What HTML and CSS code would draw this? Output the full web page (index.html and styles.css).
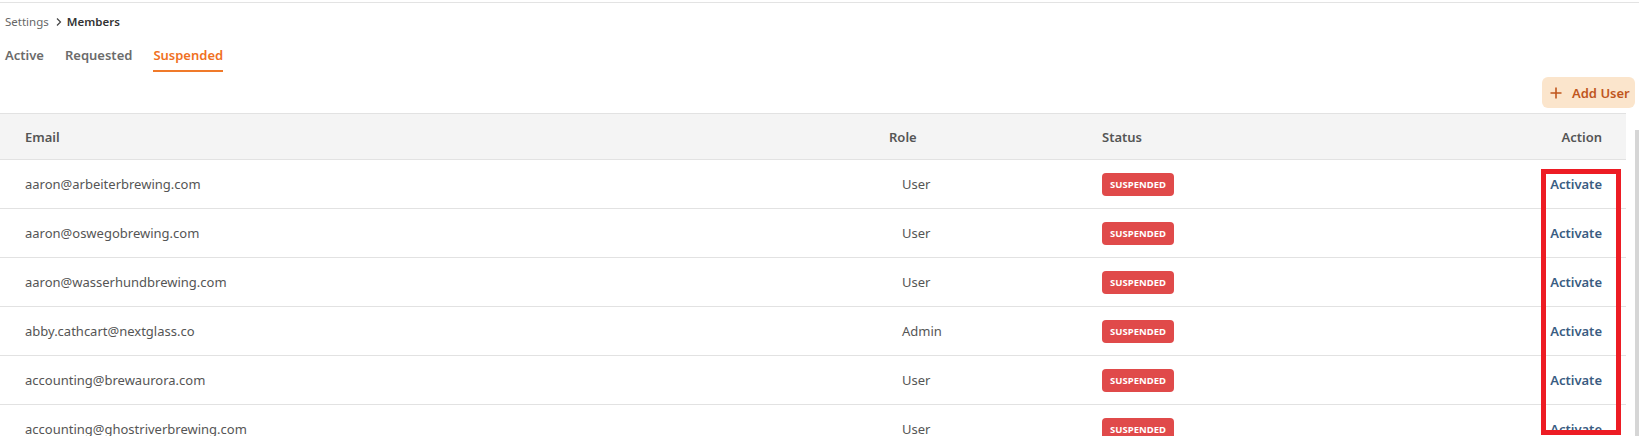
FILE: index.html
```html
<!DOCTYPE html>
<html>
<head>
<meta charset="utf-8">
<link rel="stylesheet" href="styles.css">
</head>
<body>
<div class="page">
  <div class="topline"></div>
  <div class="breadcrumb">
    <span class="crumb">Settings</span>
    <svg class="chev" width="8" height="10" viewBox="0 0 8 10"><path d="M2 1.5 L5.5 5 L2 8.5" fill="none" stroke="#444" stroke-width="1.2"/></svg>
    <span class="crumb-current">Members</span>
  </div>
  <div class="tabs">
    <div class="tab">Active</div>
    <div class="tab">Requested</div>
    <div class="tab active">Suspended</div>
  </div>
  <div class="toolbar">
    <button class="add-btn">
      <svg width="12" height="12" viewBox="0 0 12 12"><path d="M6 0.5 V11.5 M0.5 6 H11.5" stroke="#c0561d" stroke-width="1.6" fill="none"/></svg>
      <span>Add User</span>
    </button>
  </div>
  <div class="table-wrap">
    <div class="table">
      <div class="row head">
        <div class="cell email">Email</div>
        <div class="cell role-h">Role</div>
        <div class="cell status">Status</div>
        <div class="cell action">Action</div>
      </div>
      <div class="row">
        <div class="cell email">aaron@arbeiterbrewing.com</div>
        <div class="cell role">User</div>
        <div class="cell status"><span class="badge">SUSPENDED</span></div>
        <div class="cell action"><a class="link">Activate</a></div>
      </div>
      <div class="row">
        <div class="cell email">aaron@oswegobrewing.com</div>
        <div class="cell role">User</div>
        <div class="cell status"><span class="badge">SUSPENDED</span></div>
        <div class="cell action"><a class="link">Activate</a></div>
      </div>
      <div class="row">
        <div class="cell email">aaron@wasserhundbrewing.com</div>
        <div class="cell role">User</div>
        <div class="cell status"><span class="badge">SUSPENDED</span></div>
        <div class="cell action"><a class="link">Activate</a></div>
      </div>
      <div class="row">
        <div class="cell email">abby.cathcart@nextglass.co</div>
        <div class="cell role">Admin</div>
        <div class="cell status"><span class="badge">SUSPENDED</span></div>
        <div class="cell action"><a class="link">Activate</a></div>
      </div>
      <div class="row">
        <div class="cell email">accounting@brewaurora.com</div>
        <div class="cell role">User</div>
        <div class="cell status"><span class="badge">SUSPENDED</span></div>
        <div class="cell action"><a class="link">Activate</a></div>
      </div>
      <div class="row">
        <div class="cell email">accounting@ghostriverbrewing.com</div>
        <div class="cell role">User</div>
        <div class="cell status"><span class="badge">SUSPENDED</span></div>
        <div class="cell action"><a class="link">Activate</a></div>
      </div>
    </div>
    <div class="scrollbar"><div class="thumb"></div></div>
  </div>
  <div class="highlight"></div>
</div>
</body>
</html>
```
FILE: styles.css
```css
html, body {
  margin: 0;
  padding: 0;
  overflow: hidden;
  background: #ffffff;
}
body {
  font-family: "Noto Sans", "Open Sans", sans-serif;
  color: #555555;
}
.page {
  position: relative;
  width: 1639px;
  height: 436px;
  overflow: hidden;
}
.topline {
  margin-top: 2px;
  border-top: 1px solid #e3e3e3;
}
.breadcrumb {
  margin-top: 11px;
  padding-left: 5px;
  height: 16px;
  display: flex;
  align-items: center;
  gap: 3px;
  font-size: 11.5px;
  line-height: 16px;
}
.crumb { color: #666666; }
.chev { margin: 0 1px 0 3px; }
.crumb-current { color: #333333; font-weight: 600; }
.tabs {
  margin-top: 15px;
  padding-left: 5px;
  display: flex;
  gap: 21px;
}
.tab {
  font-size: 13px;
  font-weight: 600;
  line-height: 20px;
  padding-bottom: 5px;
  border-bottom: 2px solid transparent;
  color: #6b6b6b;
}
.tab.active {
  color: #f07022;
  border-bottom-color: #f07a2a;
}
.toolbar {
  margin-top: 5px;
  display: flex;
  justify-content: flex-end;
  padding-right: 4px;
}
.add-btn {
  height: 31px;
  width: 93px;
  border: none;
  border-radius: 6px;
  background: #fbe5cc;
  color: #c0561d;
  font-family: inherit;
  font-size: 13px;
  font-weight: 600;
  display: flex;
  align-items: center;
  gap: 10px;
  padding: 0 0 0 8px;
}
.table-wrap {
  margin-top: 5px;
  display: flex;
}
.table {
  width: 1626px;
  border-top: 1px solid #e2e2e2;
}
.row {
  display: grid;
  grid-template-columns: 864px 213px 1fr 200px;
  height: 48px;
  align-items: center;
  border-bottom: 1px solid #e2e2e2;
  font-size: 13px;
}
.row.head {
  height: 45px;
  background: #f4f4f4;
  font-weight: 600;
  color: #555555;
}
.cell { padding-left: 25px; white-space: nowrap; }
.role { padding-left: 38px; }
.cell.action {
  padding-left: 0;
  padding-right: 24px;
  text-align: right;
}
.badge {
  display: inline-block;
  width: 72px;
  height: 23px;
  line-height: 23px;
  border-radius: 4px;
  background: #e04a4a;
  color: #ffffff;
  font-size: 9.5px;
  font-weight: 700;
  text-align: center;
}
.link {
  color: #3a5c82;
  font-weight: 600;
}
.scrollbar {
  width: 13px;
  position: relative;
  background: #ffffff;
}
.thumb {
  position: absolute;
  right: 0;
  top: 17px;
  width: 4px;
  height: 400px;
  background: #d6d6d6;
}
.highlight {
  position: absolute;
  left: 1541px;
  top: 169px;
  width: 70px;
  height: 256px;
  border: 5px solid #ed1c24;
}
```
